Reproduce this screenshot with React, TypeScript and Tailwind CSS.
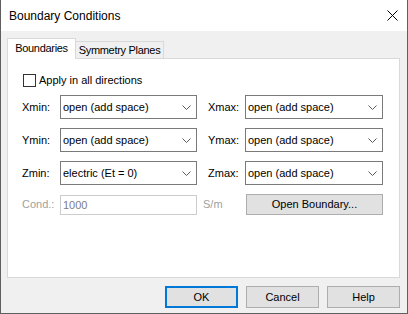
import React from 'react';

const font = { fontFamily: '"Liberation Sans", Arial, sans-serif' };

const Chevron = () => (
  <svg width="9" height="5" viewBox="0 0 9 5" className="shrink-0">
    <polyline points="0.5,0.5 4.5,4.5 8.5,0.5" fill="none" stroke="#5a5a5a" strokeWidth="1" />
  </svg>
);

const Combo: React.FC<{ value: string; w: string }> = ({ value, w }) => (
  <div
    className={`flex items-center justify-between h-[24px] border border-[#7a7a7a] bg-white pl-[2px] pr-[5px] text-[11px] text-black ${w}`}
  >
    <span className="leading-none">{value}</span>
    <Chevron />
  </div>
);

const Btn: React.FC<{ label: string; primary?: boolean; className?: string }> = ({ label, primary, className }) => (
  <div
    className={`flex items-center justify-center bg-[#e1e1e1] text-[11px] text-black ${
      primary ? 'border-2 border-[#0078d7]' : 'border border-[#adadad]'
    } ${className ?? ''}`}
  >
    {label}
  </div>
);

const rows = [
  { a: 'Xmin:', av: 'open (add space)', b: 'Xmax:', bv: 'open (add space)' },
  { a: 'Ymin:', av: 'open (add space)', b: 'Ymax:', bv: 'open (add space)' },
  { a: 'Zmin:', av: 'electric (Et = 0)', b: 'Zmax:', bv: 'open (add space)' },
];

export default function App() {
  return (
    <div
      className="w-[408px] h-[314px] flex flex-col border-l border-r border-b border-[#5f5f5f] overflow-hidden"
      style={font}
    >
      {/* title bar */}
      <div className="h-[31px] shrink-0 bg-white flex items-center justify-between pl-[8px] pr-[9px]">
        <span className="text-[12px] text-black">Boundary Conditions</span>
        <svg width="11" height="11" viewBox="0 0 11 11">
          <path d="M0.5 0.5 L10.5 10.5 M10.5 0.5 L0.5 10.5" stroke="#000" strokeWidth="1" />
        </svg>
      </div>

      <div className="flex-1 bg-[#f0f0f0] pt-[7px] pl-[6px] pr-[6px] flex flex-col">
        {/* tabs */}
        <div className="flex items-end h-[20px]">
          <div className="relative z-10 h-[21px] -mb-[1px] w-[69px] bg-white border border-b-0 border-[#d9d9d9] flex items-center justify-center text-[11px] tracking-[-0.3px] text-black pb-[1px]">
            Boundaries
          </div>
          <div className="h-[17px] w-[88px] bg-[#f0f0f0] border border-b-0 border-l-0 border-[#d9d9d9] flex items-center justify-center text-[11px] tracking-[-0.3px] text-black">
            Symmetry Planes
          </div>
        </div>

        {/* panel */}
        <div className="h-[220px] w-[393px] bg-white border border-[#d9d9d9] pt-[15px] pl-[14px] flex flex-col">
          <div className="flex items-center h-[13px] ml-[1px]">
            <div className="w-[13px] h-[13px] border border-[#333333] bg-white" />
            <span className="ml-[3px] text-[11px] text-black">Apply in all directions</span>
          </div>

          {rows.map((r, i) => (
            <div key={i} className={`flex items-center ${i === 0 ? 'mt-[8px]' : 'mt-[9px]'}`}>
              <span className="w-[38px] text-[11px] text-black">{r.a}</span>
              <Combo value={r.av} w="w-[137px]" />
              <span className="ml-[11px] w-[37px] text-[11px] text-black">{r.b}</span>
              <Combo value={r.bv} w="w-[138px]" />
            </div>
          ))}

          <div className="flex items-center mt-[9px] h-[21px]">
            <span className="w-[38px] text-[11px] text-[#a0a0a0]">Cond.:</span>
            <div className="w-[137px] h-[20px] mt-[1px] border border-[#cccccc] bg-white flex items-center pl-[2px] text-[11px] text-[#7d7d86]">
              1000
            </div>
            <span className="ml-[6px] w-[43px] text-[11px] text-[#a0a0a0]">S/m</span>
            <Btn label="Open Boundary..." className="w-[137px] h-[21px]" />
          </div>
        </div>

        {/* footer buttons */}
        <div className="flex justify-end gap-[8px] mt-[8px] w-[393px]">
          <Btn label="OK" primary className="w-[73px] h-[22px]" />
          <Btn label="Cancel" className="w-[73px] h-[22px]" />
          <Btn label="Help" className="w-[73px] h-[22px]" />
        </div>
      </div>
    </div>
  );
}
